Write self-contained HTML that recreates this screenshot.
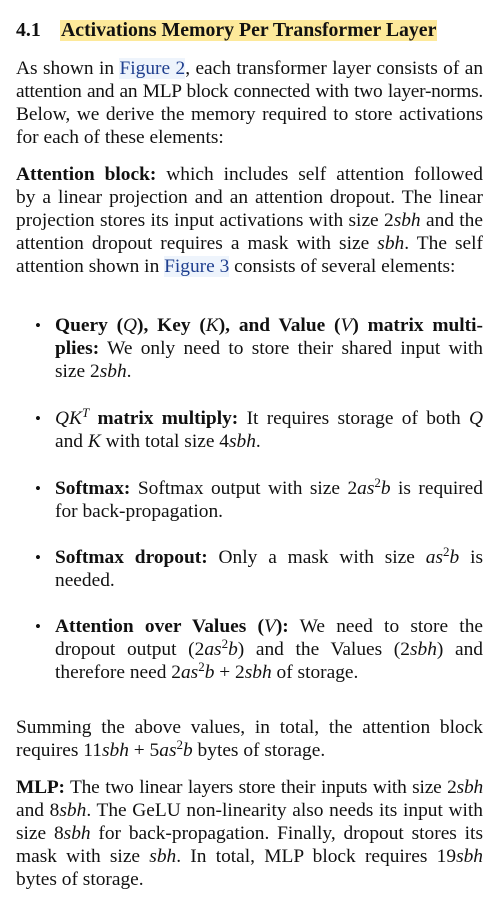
<!DOCTYPE html>
<html><head><meta charset="utf-8"><style>
html,body{margin:0;padding:0;background:#fff;}
body{width:489px;height:903px;position:relative;overflow:hidden;font-family:"Liberation Serif","DejaVu Serif",serif;color:#111;font-size:19.4px;}
.l{position:absolute;left:16px;width:467px;height:23px;line-height:23px;white-space:nowrap;text-align:justify;text-align-last:justify;}
.l.e{text-align:left;text-align-last:left;}
.b{left:55px;width:428px;}
.dot{position:absolute;left:35px;font-size:17px;line-height:23px;}
i{font-style:italic;}
.lk{color:#1f3f8f;background:#eef4fc;}
sup{font-size:13px;line-height:0;vertical-align:7px;}
</style></head><body>
<div class="l e" style="top:19px;font-weight:bold;font-size:19.8px;"><span>4.1</span><span style="position:absolute;left:44px;top:1px;height:21px;line-height:21px;background:#fde99a;padding:0 1px;">Activations Memory Per Transformer Layer</span></div>

<div class="l" style="top:57px">As shown in <span class="lk">Figure 2</span>, each transformer layer consists of an</div>
<div class="l" style="top:80px;letter-spacing:-0.25px">attention and an MLP block connected with two layer-norms.</div>
<div class="l" style="top:103px">Below, we derive the memory required to store activations</div>
<div class="l e" style="top:126px">for each of these elements:</div>

<div class="l" style="top:163px"><b>Attention block:</b> which includes self attention followed</div>
<div class="l" style="top:186px">by a linear projection and an attention dropout. The linear</div>
<div class="l" style="top:209px">projection stores its input activations with size 2<i>sbh</i> and the</div>
<div class="l" style="top:232px">attention dropout requires a mask with size <i>sbh</i>. The self</div>
<div class="l e" style="top:255px">attention shown in <span class="lk">Figure 3</span> consists of several elements:</div>

<div class="dot" style="top:314px">•</div>
<div class="l b" style="top:314px"><b>Query (<i style="font-weight:normal">Q</i>), Key (<i style="font-weight:normal">K</i>), and Value (<i style="font-weight:normal">V</i>) matrix multi-</b></div>
<div class="l b" style="top:337px"><b>plies:</b> We only need to store their shared input with</div>
<div class="l b e" style="top:360px">size 2<i>sbh</i>.</div>

<div class="dot" style="top:407px">•</div>
<div class="l b" style="top:407px"><i>QK<sup>T</sup></i> <b>matrix multiply:</b> It requires storage of both <i>Q</i></div>
<div class="l b e" style="top:430px">and <i>K</i> with total size 4<i>sbh</i>.</div>

<div class="dot" style="top:477px">•</div>
<div class="l b" style="top:477px"><b>Softmax:</b> Softmax output with size 2<i>as</i><sup>2</sup><i>b</i> is required</div>
<div class="l b e" style="top:500px">for back-propagation.</div>

<div class="dot" style="top:546px">•</div>
<div class="l b" style="top:546px"><b>Softmax dropout:</b> Only a mask with size <i>as</i><sup>2</sup><i>b</i> is</div>
<div class="l b e" style="top:569px">needed.</div>

<div class="dot" style="top:615px">•</div>
<div class="l b" style="top:615px"><b>Attention over Values (<i style="font-weight:normal">V</i>):</b> We need to store the</div>
<div class="l b" style="top:638px">dropout output (2<i>as</i><sup>2</sup><i>b</i>) and the Values (2<i>sbh</i>) and</div>
<div class="l b e" style="top:661px">therefore need 2<i>as</i><sup>2</sup><i>b</i> + 2<i>sbh</i> of storage.</div>

<div class="l" style="top:716px">Summing the above values, in total, the attention block</div>
<div class="l e" style="top:739px">requires 11<i>sbh</i> + 5<i>as</i><sup>2</sup><i>b</i> bytes of storage.</div>

<div class="l" style="top:776px;letter-spacing:-0.2px"><b>MLP:</b> The two linear layers store their inputs with size 2<i>sbh</i></div>
<div class="l" style="top:799px">and 8<i>sbh</i>. The GeLU non-linearity also needs its input with</div>
<div class="l" style="top:822px">size 8<i>sbh</i> for back-propagation. Finally, dropout stores its</div>
<div class="l" style="top:845px">mask with size <i>sbh</i>. In total, MLP block requires 19<i>sbh</i></div>
<div class="l e" style="top:868px">bytes of storage.</div>
</body></html>
